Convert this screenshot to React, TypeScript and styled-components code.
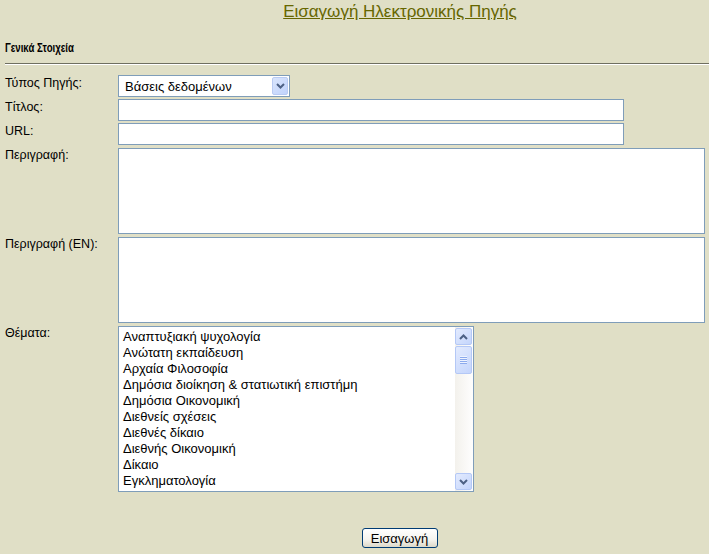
import React from 'react';
import styled, { createGlobalStyle } from 'styled-components';

const GlobalStyle = createGlobalStyle`
  html, body {
    margin: 0;
    padding: 0;
    background: #e0dfc6;
    font-family: Tahoma, "Liberation Sans", Arial, sans-serif;
    color: #000;
  }
`;

const subjects = [
  'Αναπτυξιακή ψυχολογία',
  'Ανώτατη εκπαίδευση',
  'Αρχαία Φιλοσοφία',
  'Δημόσια διοίκηση & στατιωτική επιστήμη',
  'Δημόσια Οικονομική',
  'Διεθνείς σχέσεις',
  'Διεθνές δίκαιο',
  'Διεθνής Οικονομική',
  'Δίκαιο',
  'Εγκληματολογία',
];

const Chevron: React.FC<{ up?: boolean }> = ({ up }) => (
  <svg width="9" height="6" viewBox="0 0 9 6">
    <path
      d={up ? 'M1 5 L4.5 1.5 L8 5' : 'M1 1 L4.5 4.5 L8 1'}
      fill="none"
      stroke="#4d6185"
      strokeWidth="2"
    />
  </svg>
);

const App: React.FC = () => {
  return (
    <Page>
      <GlobalStyle />
      <Title>Εισαγωγή Ηλεκτρονικής Πηγής</Title>
      <Section>
        <span>Γενικά Στοιχεία</span>
      </Section>
      <Rule />
      <Form>
        <Label>Τύπος Πηγής:</Label>
        <Select>
          <span>Βάσεις δεδομένων</span>
          <ArrowButton>
            <Chevron />
          </ArrowButton>
        </Select>

        <Label>Τίτλος:</Label>
        <TextBox />

        <Label>URL:</Label>
        <TextBox />

        <Label>Περιγραφή:</Label>
        <TextArea />

        <Label>Περιγραφή (EN):</Label>
        <TextArea />

        <Label>Θέματα:</Label>
        <ListBox>
          <Items>
            {subjects.map((s) => (
              <Item key={s}>{s}</Item>
            ))}
          </Items>
          <ScrollBar>
            <ScrollButton>
              <Chevron up />
            </ScrollButton>
            <Thumb>
              <Grip />
            </Thumb>
            <Track />
            <ScrollButton>
              <Chevron />
            </ScrollButton>
          </ScrollBar>
        </ListBox>
      </Form>
      <Actions>
        <SubmitButton>Εισαγωγή</SubmitButton>
      </Actions>
    </Page>
  );
};

const Page = styled.div`
  width: 709px;
  height: 554px;
  overflow: hidden;
`;

const Title = styled.div`
  padding-top: 2px;
  padding-left: 91px;
  text-align: center;
  font-family: "Liberation Sans", Arial, sans-serif;
  font-size: 17px;
  line-height: 20px;
  color: #666600;
  text-decoration: underline;
`;

const Section = styled.div`
  margin-top: 18px;
  padding-left: 5px;
  font-family: "Liberation Sans", Arial, sans-serif;
  font-weight: bold;
  font-size: 13px;
  line-height: 15px;

  span {
    display: inline-block;
    transform: scaleX(0.74);
    transform-origin: left center;
  }
`;

const Rule = styled.div`
  margin: 8px 0 0 5px;
  border-top: 1px solid #6f6f60;
  border-bottom: 1px solid #ffffff;
`;

const Form = styled.div`
  display: grid;
  grid-template-columns: 113px 1fr;
  row-gap: 2px;
  margin-top: 10px;
  padding-left: 5px;
  align-items: start;
`;

const Label = styled.div`
  font-family: "Liberation Sans", Arial, sans-serif;
  font-size: 12.5px;
  line-height: 15px;
  padding-top: 1px;
  color: #000;
`;

const Field = styled.div`
  box-sizing: border-box;
  background: #fff;
  border: 1px solid #7f9db9;
`;

const Select = styled(Field)`
  width: 172px;
  height: 22px;
  display: flex;
  align-items: center;
  justify-content: space-between;
  padding: 1px 1px 1px 6px;
  font-family: "Liberation Sans", Arial, sans-serif;
  font-size: 13px;
`;

const ArrowButton = styled.div`
  width: 16px;
  height: 18px;
  box-sizing: border-box;
  border: 1px solid #b9cbf3;
  border-radius: 2px;
  background: linear-gradient(135deg, #d9e5fd 0%, #c1d3fb 100%);
  display: flex;
  align-items: center;
  justify-content: center;
`;

const TextBox = styled(Field)`
  width: 506px;
  height: 22px;
`;

const TextArea = styled(Field)`
  width: 587px;
  height: 86px;
  margin-top: 1px;
`;

const ListBox = styled(Field)`
  width: 356px;
  height: 166px;
  display: flex;
  margin-top: 1px;
`;

const Items = styled.div`
  flex: 1;
  padding: 2px 0 0 4px;
  font-family: "Liberation Sans", Arial, sans-serif;
  font-size: 13px;
`;

const Item = styled.div`
  line-height: 16px;
  white-space: nowrap;
`;

const ScrollBar = styled.div`
  width: 17px;
  padding: 1px 1px 1px 0;
  display: flex;
  flex-direction: column;
  background: linear-gradient(90deg, #f3f1ec, #fefefe);
`;

const ScrollButton = styled.div`
  height: 17px;
  box-sizing: border-box;
  border: 1px solid #b4c8f6;
  border-radius: 2px;
  background: linear-gradient(135deg, #e3ebfe 0%, #c4d5fc 100%);
  display: flex;
  align-items: center;
  justify-content: center;
`;

const Thumb = styled(ScrollButton)`
  height: 28px;
  margin-top: 1px;
`;

const Grip = styled.div`
  width: 7px;
  height: 8px;
  background: repeating-linear-gradient(
    180deg,
    #eef3ff 0px,
    #eef3ff 1px,
    #8caaed 1px,
    #8caaed 2px
  );
`;

const Track = styled.div`
  flex: 1;
`;

const Actions = styled.div`
  display: flex;
  justify-content: center;
  padding-left: 90px;
  margin-top: 36px;
`;

const SubmitButton = styled.button`
  width: 76px;
  height: 20px;
  padding: 0;
  border: 1px solid #003c74;
  border-radius: 3px;
  background: linear-gradient(180deg, #ffffff 0%, #f4f3ee 60%, #dcd8c8 100%);
  font-family: "Liberation Sans", Arial, sans-serif;
  font-size: 13px;
  color: #000;
`;

export default App;
